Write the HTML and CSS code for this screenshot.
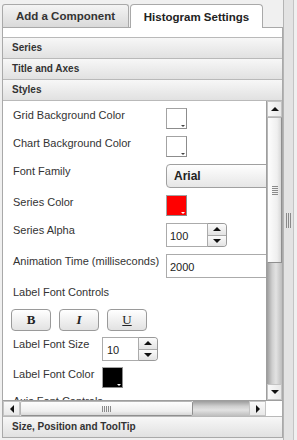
FILE: index.html
```html
<!DOCTYPE html>
<html lang="en">
<head>
    <meta charset="UTF-8">
    <title>Histogram Settings</title>
    <link rel="stylesheet" href="styles.css">
</head>
<body>
    <div class="layout">
        <div class="editor">
            <div class="tabs">
                <div class="tab">Add a Component</div>
                <div class="tab tab-active">Histogram Settings</div>
            </div>
            <div class="panel">
                <div class="acc-head">Series</div>
                <div class="acc-head">Title and Axes</div>
                <div class="acc-head acc-open">Styles</div>
                <div class="acc-body">
                    <div class="scroll-area">
                        <div class="fields">
                            <div class="row">
                                <div class="label">Grid Background Color</div>
                                <div class="swatch"></div>
                            </div>
                            <div class="row">
                                <div class="label">Chart Background Color</div>
                                <div class="swatch"></div>
                            </div>
                            <div class="row">
                                <div class="label">Font Family</div>
                                <div class="select">Arial</div>
                            </div>
                            <div class="row">
                                <div class="label">Series Color</div>
                                <div class="swatch swatch-red"></div>
                            </div>
                            <div class="row">
                                <div class="label">Series Alpha</div>
                                <div class="spin">
                                    <div class="spin-input">100</div>
                                    <div class="spin-btns">
                                        <div class="spin-up"><span class="arrow-up"></span></div>
                                        <div class="spin-down"><span class="arrow-down"></span></div>
                                    </div>
                                </div>
                            </div>
                            <div class="row">
                                <div class="label">Animation Time (milliseconds)</div>
                                <div class="text-input">2000</div>
                            </div>
                            <div class="row row-title">
                                <div class="label">Label Font Controls</div>
                            </div>
                            <div class="row row-buttons">
                                <button class="fmt-btn fmt-bold">B</button>
                                <button class="fmt-btn fmt-italic">I</button>
                                <button class="fmt-btn fmt-under">U</button>
                            </div>
                            <div class="row row-narrow">
                                <div class="label">Label Font Size</div>
                                <div class="spin">
                                    <div class="spin-input spin-small">10</div>
                                    <div class="spin-btns">
                                        <div class="spin-up"><span class="arrow-up"></span></div>
                                        <div class="spin-down"><span class="arrow-down"></span></div>
                                    </div>
                                </div>
                            </div>
                            <div class="row row-narrow">
                                <div class="label">Label Font Color</div>
                                <div class="swatch swatch-black"></div>
                            </div>
                            <div class="row row-title">
                                <div class="label">Axis Font Controls</div>
                            </div>
                        </div>
                        <div class="vscroll">
                            <div class="sb-btn"><span class="arrow-up"></span></div>
                            <div class="vs-thumb"><span class="grip-h"></span></div>
                            <div class="vs-track"></div>
                            <div class="sb-btn"><span class="arrow-down"></span></div>
                        </div>
                    </div>
                    <div class="hscroll">
                        <div class="sb-btn hs-btn"><span class="arrow-left"></span></div>
                        <div class="hs-thumb"><span class="grip-v"></span></div>
                        <div class="hs-track"></div>
                        <div class="sb-btn hs-btn"><span class="arrow-right"></span></div>
                        <div class="corner"></div>
                    </div>
                </div>
                <div class="acc-head">Size, Position and ToolTip</div>
            </div>
        </div>
        <div class="splitter"><span class="grip"></span></div>
    </div>
</body>
</html>
```

FILE: styles.css
```css
body {
    margin: 0;
    background: #f0f0f0;
    font-family: "Liberation Sans", Arial, sans-serif;
    color: #333;
    overflow: hidden;
}
.layout {
    display: flex;
    height: 440px;
}
.editor {
    width: 283px;
    padding: 4px 0 0 2px;
    box-sizing: border-box;
}
.tabs {
    display: flex;
    height: 23px;
}
.tab {
    box-sizing: border-box;
    width: 127px;
    height: 23px;
    border: 1px solid #a9a9a9;
    border-bottom: none;
    border-radius: 3px 3px 0 0;
    background: linear-gradient(#f4f4f4, #dadada);
    font-size: 11.5px;
    font-weight: bold;
    color: #333;
    display: flex;
    align-items: center;
    justify-content: center;
}
.tab-active {
    width: 133px;
    height: 24px;
    margin-left: 1px;
    background: #fff;
    border-radius: 4px 4px 0 0;
    color: #222;
    position: relative;
    z-index: 1;
}
.panel {
    box-sizing: border-box;
    width: 281px;
    height: 411px;
    border: 1px solid #a9a9a9;
    background: #fff;
    padding-top: 9px;
}
.acc-head {
    height: 20px;
    line-height: 20px;
    border-top: 1px solid #b9b9b9;
    background: linear-gradient(#f7f7f7, #e1e1e1);
    padding-left: 9px;
    font-size: 10px;
    font-weight: bold;
    color: #333;
}
.acc-open {
    border-bottom: 1px solid #b9b9b9;
}
.acc-body {
    display: flex;
    flex-direction: column;
}
.scroll-area {
    display: flex;
    height: 299px;
}
.fields {
    flex: 1;
    overflow: hidden;
    padding: 7px 0 0 10px;
    font-size: 11px;
}
.row {
    display: flex;
    align-items: flex-start;
    margin-bottom: 7px;
}
.label {
    width: 153px;
    flex-shrink: 0;
    padding-top: 1px;
    line-height: 13px;
    white-space: nowrap;
}
.row-narrow {
    margin-bottom: 6px;
}
.row-narrow .label {
    width: 89px;
}
.row-title {
    margin-bottom: 10px;
}
.row-buttons {
    gap: 8px;
    margin-left: -2px;
    margin-bottom: 6px;
}
.swatch {
    box-sizing: border-box;
    width: 21px;
    height: 21px;
    border: 1px solid #a3a3a3;
    border-right-color: #8c8c8c;
    border-bottom-color: #8c8c8c;
    background: #fff;
    position: relative;
}
.swatch::after {
    content: "";
    position: absolute;
    right: 1px;
    bottom: 1px;
    border-left: 2px solid transparent;
    border-right: 2px solid transparent;
    border-top: 2px solid #444;
}
.swatch-red {
    background: #ff0000;
}
.swatch-black {
    background: #000;
}
.swatch-red::after, .swatch-black::after {
    border-top-color: #fff;
}
.select {
    box-sizing: border-box;
    width: 130px;
    height: 24px;
    flex-shrink: 0;
    border: 1px solid #a0a0a0;
    border-radius: 4px;
    background: linear-gradient(#fefefe, #e6e6e6);
    padding-left: 7px;
    font-size: 12px;
    font-weight: bold;
    color: #222;
    display: flex;
    align-items: center;
}
.spin {
    display: flex;
}
.spin-input, .text-input {
    box-sizing: border-box;
    width: 42px;
    height: 24px;
    border: 1px solid #ababab;
    padding: 2px 0 0 3px;
    display: flex;
    align-items: center;
    background: #fff;
    color: #222;
}
.spin-small {
    width: 37px;
    padding-left: 4px;
}
.text-input {
    width: 130px;
    flex-shrink: 0;
}
.spin-btns {
    box-sizing: border-box;
    width: 19px;
    height: 24px;
    border: 1px solid #999;
    border-left: none;
    border-radius: 0 4px 4px 0;
    display: flex;
    flex-direction: column;
    overflow: hidden;
}
.spin-up, .spin-down {
    flex: 1;
    display: flex;
    align-items: center;
    justify-content: center;
    background: linear-gradient(#fbfbfb, #e3e3e3);
}
.spin-up {
    border-bottom: 1px solid #aaa;
}
.arrow-up, .arrow-down, .arrow-left, .arrow-right {
    width: 0;
    height: 0;
}
.arrow-up {
    border-left: 4px solid transparent;
    border-right: 4px solid transparent;
    border-bottom: 4px solid #111;
}
.arrow-down {
    border-left: 4px solid transparent;
    border-right: 4px solid transparent;
    border-top: 4px solid #111;
}
.arrow-left {
    border-top: 4px solid transparent;
    border-bottom: 4px solid transparent;
    border-right: 4px solid #111;
}
.arrow-right {
    border-top: 4px solid transparent;
    border-bottom: 4px solid transparent;
    border-left: 4px solid #111;
}
.fmt-btn {
    box-sizing: border-box;
    width: 40px;
    height: 22px;
    padding: 0;
    border: 1px solid #9a9a9a;
    border-radius: 4px;
    background: linear-gradient(#ffffff, #e2e2e2);
    font-family: "Liberation Serif", "Times New Roman", serif;
    font-size: 13px;
    color: #222;
}
.fmt-bold {
    font-weight: bold;
}
.fmt-italic {
    font-weight: bold;
    font-style: italic;
}
.fmt-under {
    text-decoration: underline;
}
.vscroll {
    width: 16px;
    display: flex;
    flex-direction: column;
    border-left: 1px solid #9e9e9e;
    box-sizing: border-box;
}
.sb-btn {
    box-sizing: border-box;
    height: 16px;
    border: 1px solid #c4c4c4;
    background: linear-gradient(to right, #fafafa, #e8e8e8);
    display: flex;
    align-items: center;
    justify-content: center;
}
.vs-thumb {
    box-sizing: border-box;
    height: 146px;
    border: 1px solid #b5b5b5;
    border-right-color: #8f8f8f;
    border-bottom-color: #8f8f8f;
    background: linear-gradient(to right, #fdfdfd, #efefef 70%, #d8d8d8);
    display: flex;
    align-items: center;
    justify-content: center;
}
.grip-h {
    width: 6px;
    height: 9px;
    background: repeating-linear-gradient(#8a8a8a 0 1px, transparent 1px 2px);
}
.vs-track {
    flex: 1;
    background: linear-gradient(to right, #9c9c9c, #cfcfcf 35%, #e2e2e2 60%, #bdbdbd);
}
.hscroll {
    display: flex;
    height: 16px;
    border-top: 1px solid #9e9e9e;
    box-sizing: border-box;
}
.hs-btn {
    width: 17px;
    height: 15px;
    background: linear-gradient(#fafafa, #e8e8e8);
}
.hs-thumb {
    box-sizing: border-box;
    width: 173px;
    border: 1px solid #b5b5b5;
    border-right-color: #8f8f8f;
    border-bottom-color: #8f8f8f;
    border-radius: 2px;
    background: linear-gradient(#fdfdfd, #efefef 70%, #d8d8d8);
    display: flex;
    align-items: center;
    justify-content: center;
}
.grip-v {
    width: 9px;
    height: 6px;
    background: repeating-linear-gradient(to right, #8a8a8a 0 1px, transparent 1px 2px);
}
.hs-track {
    flex: 1;
    background: linear-gradient(#9c9c9c, #cfcfcf 35%, #e2e2e2 60%, #bdbdbd);
}
.corner {
    width: 16px;
    background: #fff;
}
.splitter {
    box-sizing: border-box;
    width: 11px;
    border-left: 1px solid #b4b4b4;
    border-right: 1px solid #c4c4c4;
    background: #e3e3e3;
    display: flex;
    align-items: center;
    justify-content: center;
}
.grip {
    width: 5px;
    height: 15px;
    background: repeating-linear-gradient(to right, #8a8a8a 0 1px, transparent 1px 2px);
}
```
